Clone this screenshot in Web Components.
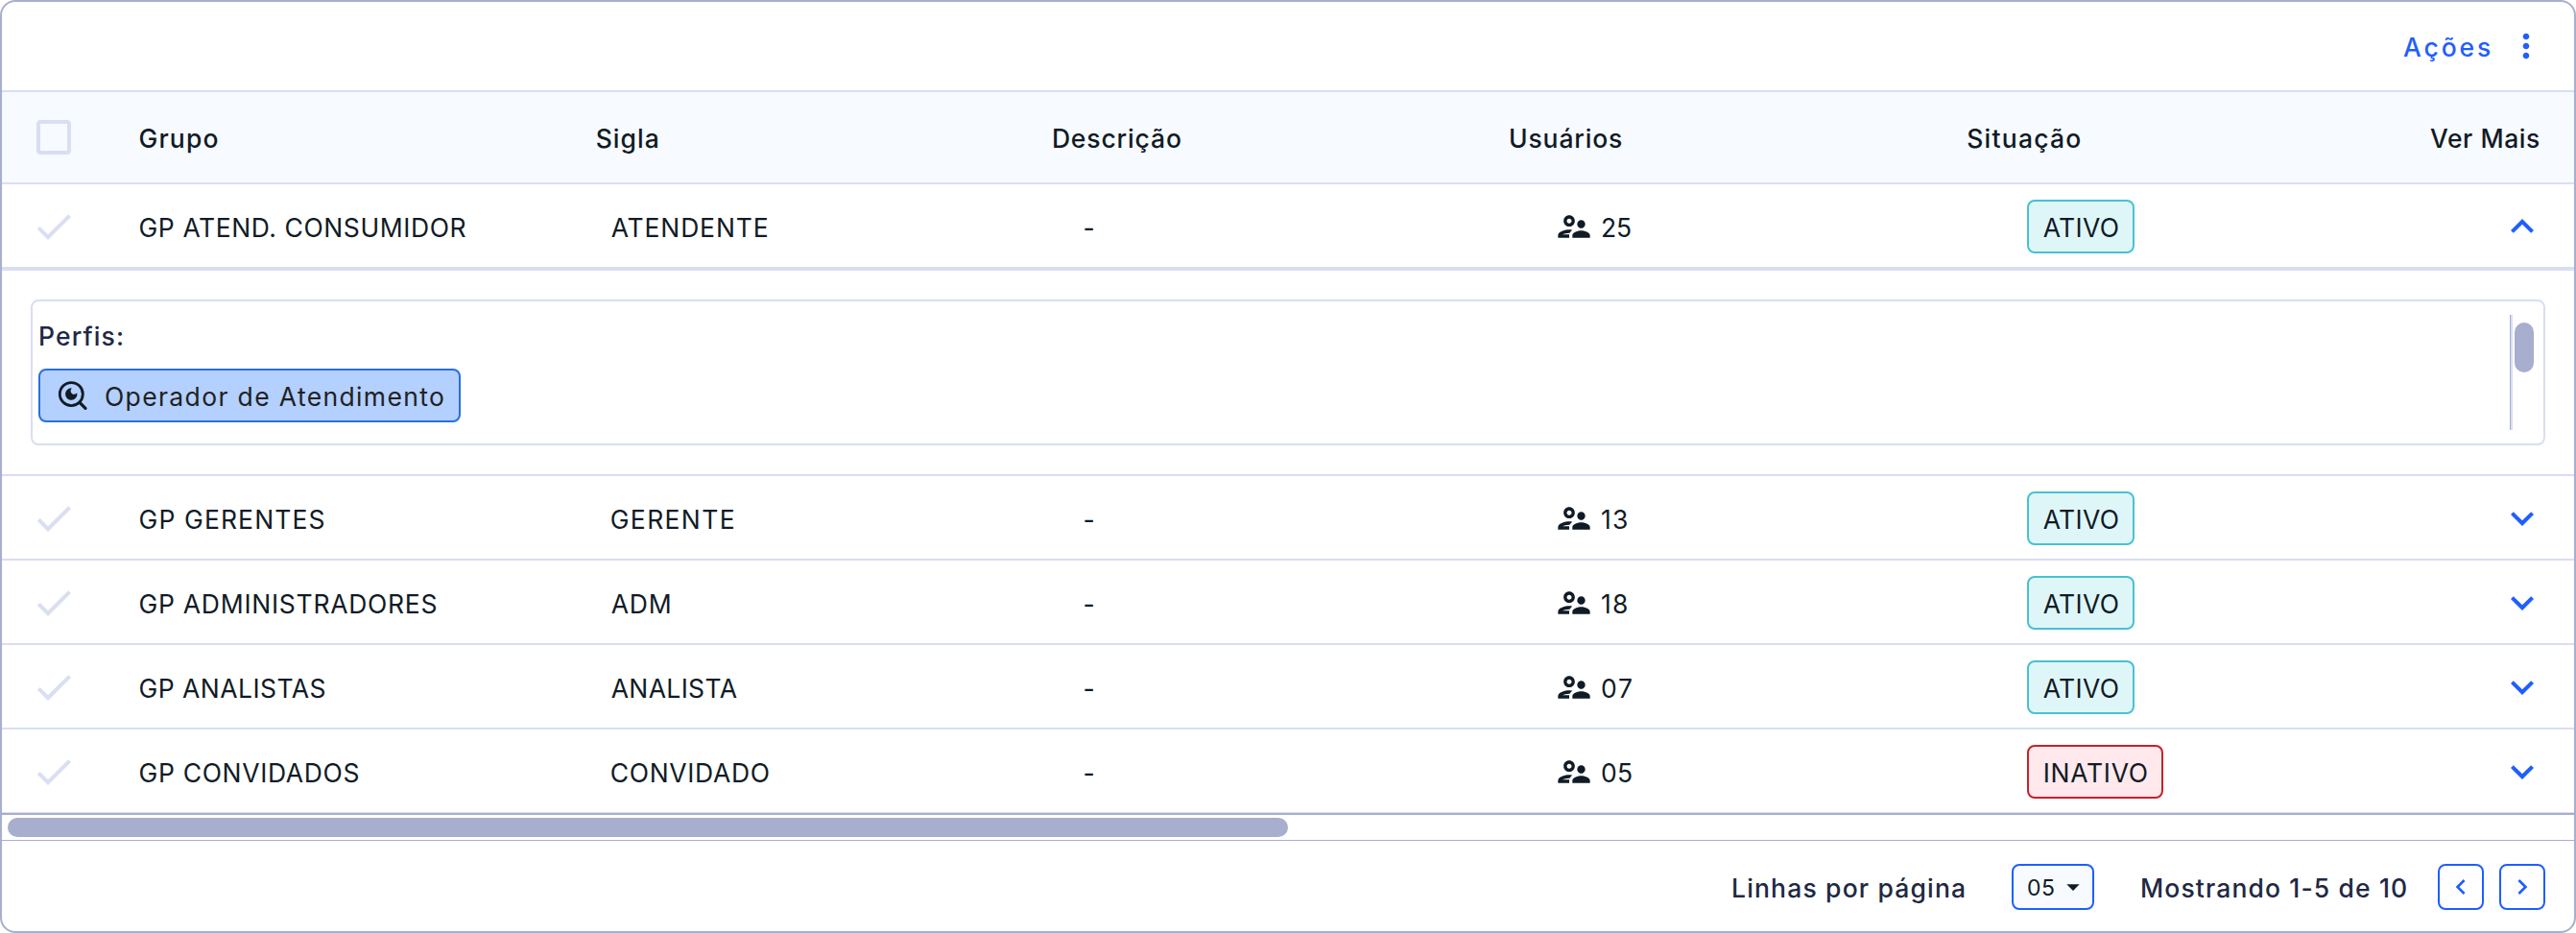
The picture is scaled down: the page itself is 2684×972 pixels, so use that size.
<!DOCTYPE html>
<html lang="pt-BR">
<head>
<meta charset="utf-8">
<title>Grupos</title>
<style>
    body {
        margin: 0;
        font-family: Inter, "Liberation Sans", sans-serif;
        font-size: 26.5px;
        line-height: 34px;
        color: #101b26;
        background: #fff;
    }
</style>
</head>
<body>
<group-table>
    <table-toolbar slot="toolbar"><fit-text measure="91">Ações</fit-text></table-toolbar>
    <table-header slot="header">
        <fit-text measure="81">Grupo</fit-text>
        <fit-text measure="64">Sigla</fit-text>
        <fit-text measure="132">Descrição</fit-text>
        <fit-text measure="116">Usuários</fit-text>
        <fit-text measure="117">Situação</fit-text>
        <fit-text measure="114">Ver Mais</fit-text>
    </table-header>
    <group-row open>
        <fit-text slot="name" measure="340">GP ATEND. CONSUMIDOR</fit-text>
        <fit-text slot="code" measure="163">ATENDENTE</fit-text>
        <fit-text slot="users" measure="30">25</fit-text>
        <status-badge slot="status"><fit-text measure="78">ATIVO</fit-text></status-badge>
    </group-row>
    <group-detail>
        <fit-text slot="label" measure="85">Perfis:</fit-text>
        <profile-chip><fit-text measure="352">Operador de Atendimento</fit-text></profile-chip>
    </group-detail>
    <group-row>
        <fit-text slot="name" measure="192">GP GERENTES</fit-text>
        <fit-text slot="code" measure="128">GERENTE</fit-text>
        <fit-text slot="users" measure="26">13</fit-text>
        <status-badge slot="status"><fit-text measure="78">ATIVO</fit-text></status-badge>
    </group-row>
    <group-row>
        <fit-text slot="name" measure="309">GP ADMINISTRADORES</fit-text>
        <fit-text slot="code" measure="61">ADM</fit-text>
        <fit-text slot="users" measure="26">18</fit-text>
        <status-badge slot="status"><fit-text measure="78">ATIVO</fit-text></status-badge>
    </group-row>
    <group-row>
        <fit-text slot="name" measure="193">GP ANALISTAS</fit-text>
        <fit-text slot="code" measure="131">ANALISTA</fit-text>
        <fit-text slot="users" measure="31">07</fit-text>
        <status-badge slot="status"><fit-text measure="78">ATIVO</fit-text></status-badge>
    </group-row>
    <group-row>
        <fit-text slot="name" measure="228">GP CONVIDADOS</fit-text>
        <fit-text slot="code" measure="164">CONVIDADO</fit-text>
        <fit-text slot="users" measure="31">05</fit-text>
        <status-badge slot="status" inactive><fit-text measure="106">INATIVO</fit-text></status-badge>
    </group-row>
    <table-footer slot="footer">
        <fit-text slot="lines" measure="241">Linhas por página</fit-text>
        <fit-text slot="size" measure="27">05</fit-text>
        <fit-text slot="range" measure="275">Mostrando 1-5 de 10</fit-text>
    </table-footer>
</group-table>

<script>
(function () {
    // every path is on a 24 unit grid
    const icons = {
        check: "M9 16.17 4.83 12l-1.42 1.41L9 19 21 7l-1.41-1.41z",
        box: "M19 5v14H5V5h14m0-2H5c-1.1 0-2 .9-2 2v14c0 1.1.9 2 2 2h14c1.1 0 2-.9 2-2V5c0-1.1-.9-2-2-2z",
        up: "M12 8l-6 6 1.41 1.41L12 10.83l4.59 4.58L18 14z",
        down: "M16.59 8.59 12 13.17 7.41 8.59 6 10l6 6 6-6z",
        left: "M15.41 7.41 14 6l-6 6 6 6 1.41-1.41L10.83 12z",
        right: "M10 6 8.59 7.41 13.17 12l-4.58 4.59L10 18l6-6z",
        caret: "M7 10l5 5 5-5z",
        more: "M12 8c1.1 0 2-.9 2-2s-.9-2-2-2-2 .9-2 2 .9 2 2 2zm0 2c-1.1 0-2 .9-2 2s.9 2 2 2 2-.9 2-2-.9-2-2-2zm0 6c-1.1 0-2 .9-2 2s.9 2 2 2 2-.9 2-2-.9-2-2-2z",
        users: "M9 12c1.93 0 3.5-1.57 3.5-3.5S10.93 5 9 5 5.5 6.57 5.5 8.5 7.07 12 9 12zm0-5c.83 0 1.5.67 1.5 1.5S9.83 10 9 10s-1.5-.67-1.5-1.5S8.17 7 9 7zm.05 10H4.77c.99-.5 2.7-1 4.23-1 .11 0 .23.01.34.01.34-.73.93-1.33 1.64-1.81-.73-.13-1.42-.2-1.98-.2-2.34 0-7 1.17-7 3.5V19h7v-1.5c0-.17.02-.34.05-.5zm7.45-2.5c-1.84 0-5.5 1.01-5.5 3V19h11v-1.5c0-1.99-3.66-3-5.5-3zm1.21-1.82c.76-.43 1.29-1.24 1.29-2.18C19 9.12 17.88 8 16.5 8S14 9.12 14 10.5c0 .94.53 1.75 1.29 2.18.36.2.77.32 1.21.32s.85-.12 1.21-.32z"
    };

    function define(name, html, setup) {
        let tmpl = document.createElement("template");
        tmpl.innerHTML = html;
        customElements.define(name, class extends HTMLElement {
            constructor() {
                super();
                this.attachShadow({ mode: "open" });
                this.shadowRoot.appendChild(tmpl.content.cloneNode(true));
            }
            connectedCallback() {
                if (setup) {
                    setup(this, this.shadowRoot);
                }
            }
        });
    }

    define("group-table", `
      <style>
          :host {
              display: flex;
              flex-direction: column;
              box-sizing: border-box;
              width: 2684px;
              height: 972px;
              border: 2px solid #a8aecd;
              border-radius: 16px;
              overflow: hidden;
          }
          .track {
              height: 20px;
              margin-top: -1px;
              padding: 3px 6px;
              border-top: 2px solid #a8aecd;
              border-bottom: 1px solid #a8aecd;
          }
          .thumb {
              width: 1334px;
              height: 20px;
              border-radius: 10px;
              background: #a8aecd;
          }
      </style>
      <slot name="toolbar"></slot>
      <slot name="header"></slot>
      <slot></slot>
      <div class="track"><div class="thumb"></div></div>
      <slot name="footer"></slot>
    `);

    define("table-toolbar", `
      <style>
          :host {
              display: flex;
              align-items: center;
              justify-content: flex-end;
              gap: 17px;
              height: 92px;
              padding-right: 30px;
              border-bottom: 2px solid #d9def2;
              color: #1f5eff;
              font-weight: 500;
          }
      </style>
      <slot></slot>
      <ui-icon name="more" size="40"></ui-icon>
    `);

    define("table-header", `
      <style>
          :host {
              display: grid;
              grid-template-columns: 112px repeat(4, 476.2px) 476px 1fr;
              align-items: center;
              box-sizing: border-box;
              height: 96px;
              padding: 0 36px 0 30px;
              border-bottom: 2px solid #d9def2;
              background: #f7faff;
              font-weight: 500;
          }
          ui-icon {
              color: #d9def2;
          }
          ::slotted(*) {
              margin-left: 1.5px;
          }
          ::slotted(:last-child) {
              justify-self: end;
          }
      </style>
      <ui-icon name="box" size="48"></ui-icon>
      <slot></slot>
    `);

    define("group-row", `
      <style>
          :host {
              display: grid;
              grid-template-columns: 112px repeat(4, 476.2px) 476px 1fr;
              align-items: center;
              box-sizing: border-box;
              height: 88px;
              padding: 2px 30px 0;
              border-bottom: 2px solid #d9def2;
          }
          .check {
              color: #d9def2;
          }
          .name {
              padding-left: 1.5px;
          }
          .code {
              padding-left: 16.5px;
          }
          .desc {
              padding-left: 32px;
          }
          .users {
              display: flex;
              align-items: center;
              gap: 9px;
              padding-left: 47.5px;
          }
          .status {
              padding-left: 63px;
          }
          .toggle {
              justify-self: end;
              color: #1f5eff;
          }
      </style>
      <ui-icon class="check" name="check" size="48"></ui-icon>
      <div class="name"><slot name="name"></slot></div>
      <div class="code"><slot name="code"></slot></div>
      <div class="desc"><fit-text>-</fit-text></div>
      <div class="users"><ui-icon name="users" size="40"></ui-icon><slot name="users"></slot></div>
      <div class="status"><slot name="status"></slot></div>
      <ui-icon class="toggle" name="down" size="48"></ui-icon>
    `, function (host, root) {
        if (host.hasAttribute("open")) {
            root.querySelector(".toggle").setAttribute("name", "up");
        }
    });

    define("group-detail", `
      <style>
          :host {
              display: block;
              box-sizing: border-box;
              height: 216px;
              padding: 30px;
              border-top: 2px solid #d9def2;
              border-bottom: 2px solid #d9def2;
          }
          .box {
              display: flex;
              justify-content: space-between;
              box-sizing: border-box;
              height: 152px;
              padding: 14px 10px 14px 6px;
              border: 2px solid #d9def2;
              border-radius: 8px;
          }
          .label {
              height: 34px;
              margin: 4px 0 18px 2px;
              font-weight: 500;
              color: #202843;
          }
          .track {
              box-sizing: border-box;
              width: 25px;
              height: 120px;
              padding: 8px 0 0 2px;
              border-left: 1px solid #a8aecd;
              box-shadow: inset 2px 0 #d9def2;
          }
          .thumb {
              width: 20px;
              height: 52px;
              margin-left: 2px;
              border-radius: 10px;
              background: #a8aecd;
          }
      </style>
      <div class="box">
        <div>
          <div class="label"><slot name="label"></slot></div>
          <slot></slot>
        </div>
        <div class="track"><div class="thumb"></div></div>
      </div>
    `);

    define("profile-chip", `
      <style>
          :host {
              display: flex;
              align-items: center;
              gap: 17px;
              box-sizing: border-box;
              width: 440px;
              height: 56px;
              padding-left: 17px;
              border: 2px solid #2870db;
              border-radius: 8px;
              background: #b3d0ff;
              color: #212121;
          }
          svg {
              width: 34px;
              height: 34px;
              flex: none;
          }
      </style>
      <svg viewBox="0 0 34 34" fill="none" stroke="#101b26" stroke-width="2.8">
        <circle cx="15.3" cy="15.6" r="12"></circle>
        <path d="M24 24.3l6 6" stroke-width="3.2" stroke-linecap="round"></path>
        <path d="M15.8 9.4a3.7 3.7 0 1 0 5.5 4.9 6.2 6.2 0 1 1-5.5-4.9z" fill="#101b26" stroke="none"></path>
      </svg>
      <slot></slot>
    `);

    define("status-badge", `
      <style>
          :host {
              display: inline-flex;
              align-items: center;
              vertical-align: top;
              height: 52px;
              padding: 0 15px;
              border: 2px solid #47c2d0;
              border-radius: 8px;
              background: #dff6f9;
          }
          :host([inactive]) {
              padding: 0 15px 0 17px;
              border-color: #c82128;
              background: #ffe9ec;
          }
      </style>
      <slot></slot>
    `);

    define("table-footer", `
      <style>
          :host {
              display: flex;
              flex: 1;
              align-items: center;
              justify-content: flex-end;
              padding: 2px 30px 0 0;
              font-weight: 500;
              color: #202843;
          }
          .size {
              display: flex;
              align-items: center;
              gap: 4px;
              box-sizing: border-box;
              width: 86px;
              height: 48px;
              margin: 0 50px 0 49px;
              padding-left: 15px;
              border: 2px solid #1f5eff;
              border-radius: 8px;
              background: #f7faff;
              font-size: 23px;
              font-weight: 400;
              color: #101b26;
          }
          button {
              display: flex;
              align-items: center;
              justify-content: center;
              width: 48px;
              height: 48px;
              margin-left: 16px;
              padding: 0;
              border: 2px solid #1f5eff;
              border-radius: 8px;
              background: #fff;
              color: #1f5eff;
          }
          .prev {
              margin-left: 33px;
          }
      </style>
      <slot name="lines"></slot>
      <div class="size"><slot name="size"></slot><ui-icon name="caret" size="32"></ui-icon></div>
      <slot name="range"></slot>
      <button class="prev"><ui-icon name="left" size="32"></ui-icon></button>
      <button><ui-icon name="right" size="32"></ui-icon></button>
    `);

    class UiIcon extends HTMLElement {
        constructor() {
            super();
            this.attachShadow({ mode: "open" });
        }
        connectedCallback() {
            this.render();
        }
        attributeChangedCallback() {
            this.render();
        }
        render() {
            let size = this.getAttribute("size") || 24;
            this.shadowRoot.innerHTML = `
              <style>
                  :host { display: block; flex: none; width: ${size}px; height: ${size}px; }
                  svg { display: block; width: 100%; height: 100%; fill: currentColor; }
              </style>
              <svg viewBox="0 0 24 24"><path d="${icons[this.getAttribute("name")]}"></path></svg>
            `;
        }
        static get observedAttributes() {
            return ["name", "size"];
        }
    }
    customElements.define("ui-icon", UiIcon);

    // Tracks its text out to the given measure and trims the side bearings,
    // so that labels line up on their visible edges.
    let ctx = document.createElement("canvas").getContext("2d");
    define("fit-text", `
      <style>
          :host {
              display: block;
              white-space: nowrap;
          }
          span {
              display: block;
              position: relative;
              top: 1px;
          }
      </style>
      <span><slot></slot></span>
    `, function (host, root) {
        let measure = parseFloat(host.getAttribute("measure"));
        let text = host.textContent;
        let css = getComputedStyle(host);
        if (!measure) {
            return;
        }
        ctx.font = css.fontWeight + " " + css.fontSize + " " + css.fontFamily;
        let m = ctx.measureText(text);
        let ink = m.actualBoundingBoxRight + m.actualBoundingBoxLeft;
        root.querySelector("span").style.letterSpacing = (measure - ink) / (text.length - 1) + "px";
        root.querySelector("span").style.marginLeft = m.actualBoundingBoxLeft + "px";
        host.style.width = measure + "px";
    });
})();
</script>
</body>
</html>
